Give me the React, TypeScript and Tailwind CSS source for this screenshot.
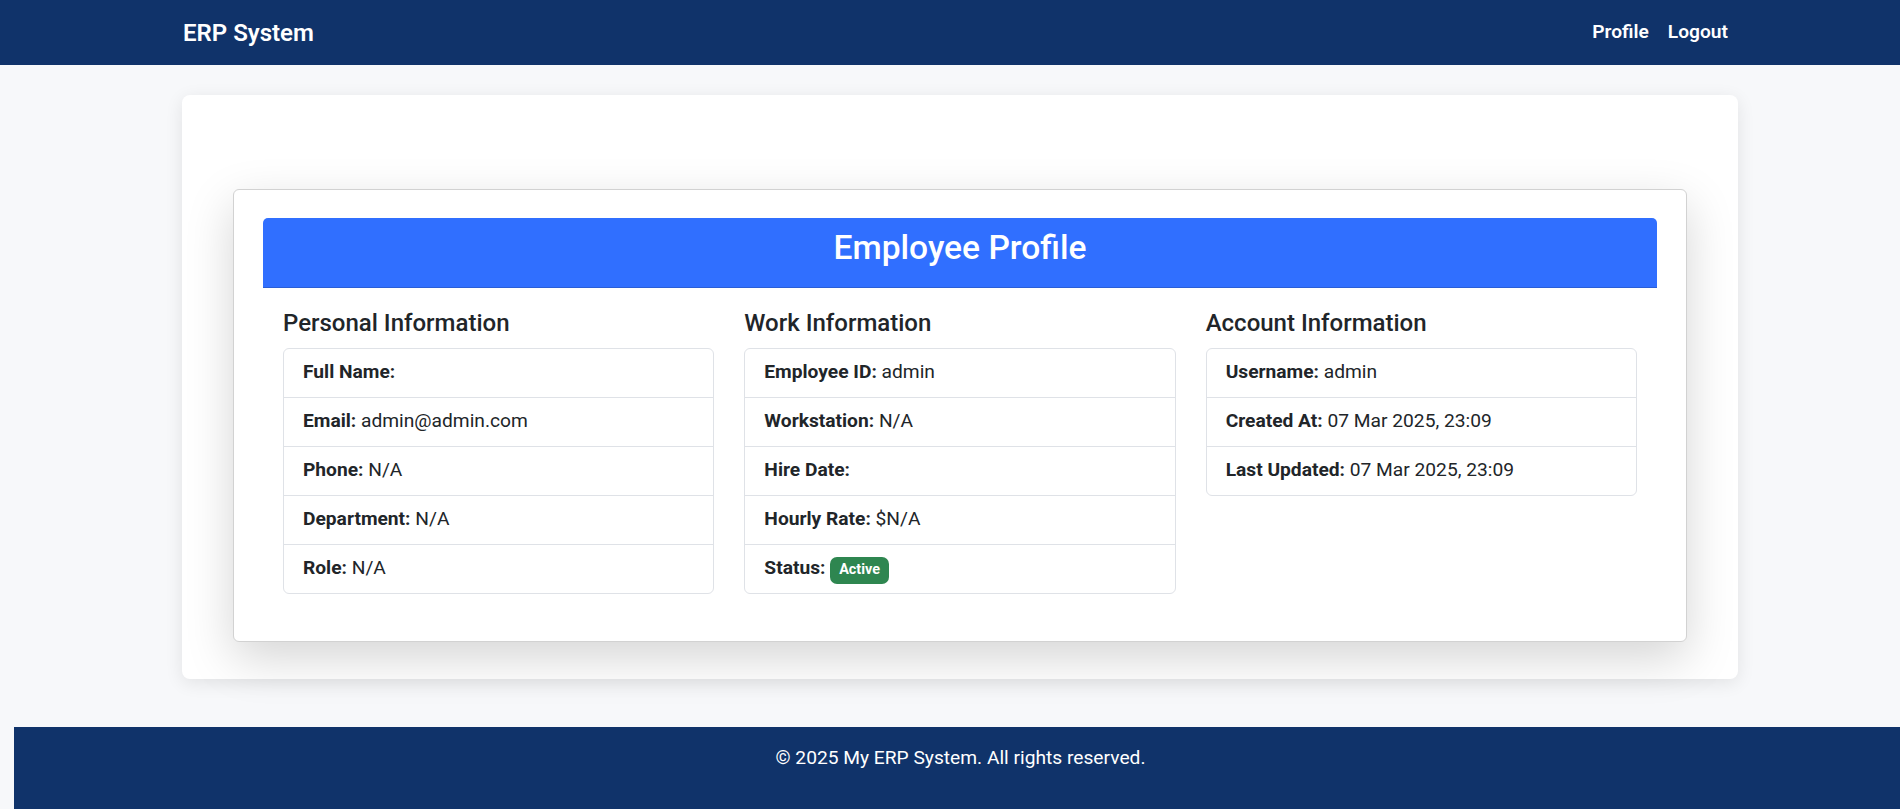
import React from "react";

type Row = { label: string; value?: React.ReactNode };

const personal: Row[] = [
  { label: "Full Name:" },
  { label: "Email:", value: "admin@admin.com" },
  { label: "Phone:", value: "N/A" },
  { label: "Department:", value: "N/A" },
  { label: "Role:", value: "N/A" },
];

const work: Row[] = [
  { label: "Employee ID:", value: "admin" },
  { label: "Workstation:", value: "N/A" },
  { label: "Hire Date:" },
  { label: "Hourly Rate:", value: "$N/A" },
  {
    label: "Status:",
    value: (
      <span className="relative top-[1px] inline-flex h-[27px] items-center rounded-[7px] bg-[#2e8650] px-[9px] text-[14.4px] leading-none font-bold text-white align-middle">
        Active
      </span>
    ),
  },
];

const account: Row[] = [
  { label: "Username:", value: "admin" },
  { label: "Created At:", value: "07 Mar 2025, 23:09" },
  { label: "Last Updated:", value: "07 Mar 2025, 23:09" },
];

const InfoSection: React.FC<{ title: string; rows: Row[] }> = ({ title, rows }) => (
  <div>
    <h5 className="mb-[10px] text-[24px] font-medium leading-[1.2] text-[#212529]">{title}</h5>
    <ul className="rounded-[6px] border border-[#dfe2e7]">
      {rows.map((r, i) => (
        <li
          key={r.label}
          className={
            "px-[19px] py-[9.6px] text-[19.2px] leading-[28.8px] text-[#212529] " +
            (i > 0 ? "border-t border-[#dfe2e7]" : "")
          }
        >
          <strong className="font-bold">{r.label}</strong>
          {r.value !== undefined && <> {r.value}</>}
        </li>
      ))}
    </ul>
  </div>
);

export default function App() {
  return (
    <div className="min-h-screen bg-[#f7f8fa] font-['Roboto',sans-serif] text-[19.2px]">
      <nav className="h-[65px] bg-[#10336a]">
        <div className="ml-[182px] flex h-full w-[1556px] items-center justify-between">
          <span className="pl-[1px] text-[24px] leading-[36px] font-semibold text-white">ERP System</span>
          <div className="flex items-center gap-[19px] pr-[10px] text-[19.2px] leading-[28.8px] font-semibold text-white">
            <a>Profile</a>
            <a>Logout</a>
          </div>
        </div>
      </nav>

      <main className="pt-[30px] pb-[48px]">
        <div className="ml-[182px] w-[1556px] rounded-[8px] bg-white px-[51px] pt-[94px] pb-[37px] shadow-[0_4px_18px_rgba(0,0,0,0.09)]">
          <div className="rounded-[6px] border border-[#d2d2d2] bg-white px-[29px] py-[28px] shadow-[0_16px_48px_rgba(0,0,0,0.17)]">
            <div className="flex h-[70px] justify-center rounded-t-[5px] border-b border-[#2a5ed6] bg-[#306fff] pt-[10px]">
              <h3 className="text-[33.6px] font-medium leading-[1.2] text-white">Employee Profile</h3>
            </div>
            <div className="grid grid-cols-3 gap-[30px] px-[20px] pt-[21px] pb-[19px]">
              <InfoSection title="Personal Information" rows={personal} />
              <InfoSection title="Work Information" rows={work} />
              <InfoSection title="Account Information" rows={account} />
            </div>
          </div>
        </div>
      </main>

      <footer className="ml-[14px] h-[100px] bg-[#10336a] pt-[17px] pl-[7px] text-center text-[19.2px] leading-[28.8px] text-white">
        © 2025 My ERP System. All rights reserved.
      </footer>
    </div>
  );
}
